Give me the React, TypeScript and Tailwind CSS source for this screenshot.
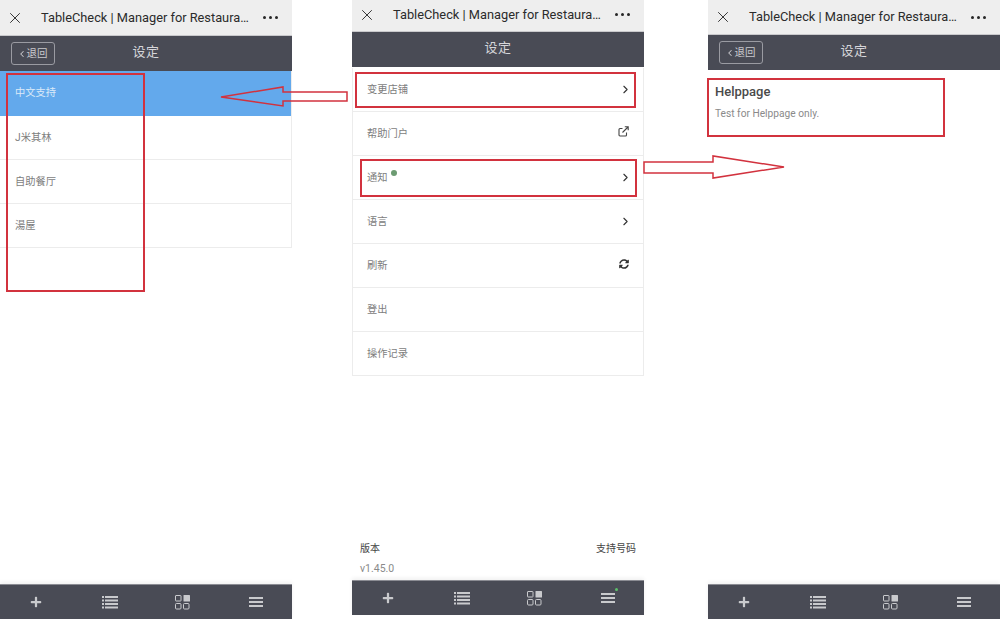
import React from "react";
import { ChevronRight, ChevronLeft, X } from "lucide-react";
import { FaPlus, FaSyncAlt } from "react-icons/fa";

const sans = "font-['Roboto','Noto_Sans_CJK_SC',sans-serif]";

const TopBar = ({ h }: { h: string }) => (
  <div className={`${h} shrink-0 flex items-center bg-[#eeeeee] text-[#2b2b2b] border-b border-[#c9c9cc]`}>
    <X className="w-[18px] h-[18px] ml-[6px] shrink-0" strokeWidth={1.25} />
    <div className="ml-[17px] w-[210px] whitespace-nowrap text-[12.8px] leading-5">
      TableCheck | Manager for Restaura…
    </div>
    <div className="ml-[12px] flex gap-[3px]">
      <span className="w-[3px] h-[3px] rounded-full bg-[#262626]" />
      <span className="w-[3px] h-[3px] rounded-full bg-[#262626]" />
      <span className="w-[3px] h-[3px] rounded-full bg-[#262626]" />
    </div>
  </div>
);

const NavBar = ({ back }: { back?: boolean }) => (
  <div className="relative h-[35px] shrink-0 flex items-center justify-center bg-[#494b55] text-[#d6d6da]">
    {back && (
      <div className="absolute left-[11px] top-[6px] h-[23px] w-[44px] flex items-center justify-center rounded-[3px] border border-[#9a9ba2] text-[10.5px] text-[#c8c8cc]">
        <ChevronLeft className="w-[10px] h-[10px] -ml-[2px]" strokeWidth={2.5} />
        退回
      </div>
    )}
    <span className="-mt-[4px] text-[13px] leading-5 tracking-[0.5px]">设定</span>
  </div>
);

const ListIcon = () => (
  <svg width="16" height="14" viewBox="0 0 16 14" fill="#c9cacd">
    <rect x="0" y="1" width="2" height="2" />
    <rect x="3" y="1" width="13" height="2" />
    <rect x="0" y="4.5" width="2" height="2" />
    <rect x="3" y="4.5" width="13" height="2" />
    <rect x="0" y="8" width="2" height="2" />
    <rect x="3" y="8" width="13" height="2" />
    <rect x="0" y="11.5" width="2" height="2" />
    <rect x="3" y="11.5" width="13" height="2" />
  </svg>
);

const GridIcon = () => (
  <svg width="15" height="15" viewBox="0 0 15 15" fill="none" stroke="#c9cacd" strokeWidth="1">
    <rect x="0.5" y="0.5" width="5.5" height="5.5" rx="0.5" />
    <rect x="8.5" y="0" width="6.5" height="6.5" rx="0.5" fill="#c9cacd" stroke="none" />
    <rect x="0.5" y="8.5" width="5.5" height="5.5" rx="1" />
    <rect x="8.5" y="8.5" width="5.5" height="5.5" rx="1" />
  </svg>
);

const MenuIcon = () => (
  <svg width="14" height="12" viewBox="0 0 14 12" fill="#c9cacd">
    <rect x="0" y="1" width="14" height="2" />
    <rect x="0" y="5" width="14" height="2" />
    <rect x="0" y="9" width="14" height="2" />
  </svg>
);

const Footer = ({ dot }: { dot?: boolean }) => (
  <div className="h-[35px] shrink-0 grid grid-cols-4 items-center justify-items-center bg-[#494b55] border-t border-[#8b8c93] shadow-[0_-2px_4px_rgba(0,0,0,0.06)]">
    <FaPlus className="w-[12px] h-[12px] -ml-[1px] text-[#c9cacd]" />
    <ListIcon />
    <GridIcon />
    <div className="relative flex">
      <MenuIcon />
      {dot && <span className="absolute -top-[4px] -right-[3px] w-[3px] h-[3px] rounded-full bg-[#5cc069]" />}
    </div>
  </div>
);

const Row = ({
  label,
  right,
  active,
  dot,
  inset,
}: {
  label: string;
  right?: React.ReactNode;
  active?: boolean;
  dot?: boolean;
  inset?: boolean;
}) => (
  <div
    className={`flex items-center justify-between text-[10.25px] border-b pr-[14px] ${inset ? "pl-[14px]" : "pl-[15px]"} ${
      active ? "h-[45px] bg-[#63a9ec] text-[#dbe9f8] border-[#63a9ec]" : "h-[44px] text-[#7d7d7d] border-[#ececec]"
    }`}
  >
    <span className="relative">
      {label}
      {dot && <span className="absolute -top-[0px] -right-[9px] w-[6px] h-[6px] rounded-full bg-[#6c9b72]" />}
    </span>
    {right}
  </div>
);

const chevron = <ChevronRight className="w-[13px] h-[13px] -mr-[3px] text-[#333333]" strokeWidth={2} />;

const ShareIcon = () => (
  <svg width="11" height="11" viewBox="0 0 11 11" fill="none" stroke="#444444" strokeWidth="1.1" className="-mt-[5px]">
    <path d="M8.5 6.5v2.5a1 1 0 0 1-1 1H2a1 1 0 0 1-1-1V3.5a1 1 0 0 1 1-1h2.5" />
    <path d="M4.5 6.5 10 1M6.8 0.8H10.2V4.2" />
  </svg>
);

const Frame = ({ className }: { className: string }) => (
  <div className={`absolute border-2 border-[#d2323e] pointer-events-none ${className}`} />
);

export default function App() {
  return (
    <div className={`relative w-[1000px] h-[620px] flex items-start bg-white overflow-hidden ${sans}`}>
      <div className="w-[292px] h-[619px] flex flex-col">
        <TopBar h="h-[36px]" />
        <NavBar back />
        <div className="flex-1">
          <div className="border-r border-[#ececec]">
            <Row label="中文支持" active />
            <Row label="J米其林" />
            <Row label="自助餐厅" />
            <Row label="湯屋" />
          </div>
        </div>
        <Footer />
      </div>

      <div className="ml-[60px] w-[292px] h-[615px] flex flex-col">
        <TopBar h="h-[32px] pb-[2px]" />
        <NavBar />
        <div className="flex-1 flex flex-col">
          <div className="border-x border-[#ececec] mt-[1px]">
            <Row inset label="变更店铺" right={chevron} />
            <Row inset label="帮助门户" right={<ShareIcon />} />
            <Row inset label="通知" right={chevron} dot />
            <Row inset label="语言" right={chevron} />
            <Row inset label="刷新" right={<FaSyncAlt className="w-[10px] h-[10px] -mt-[4px] text-[#333333]" />} />
            <Row inset label="登出" />
            <Row inset label="操作记录" />
          </div>
          <div className="mt-auto px-[8px] pb-[3px]">
            <div className="flex justify-between text-[10px] leading-4 text-[#444444]">
              <span>版本</span>
              <span>支持号码</span>
            </div>
            <div className="mt-[4px] text-[10.5px] leading-4 text-[#8a8a8a]">v1.45.0</div>
          </div>
        </div>
        <Footer dot />
      </div>

      <div className="ml-[64px] w-[292px] h-[619px] flex flex-col">
        <TopBar h="h-[35px]" />
        <NavBar back />
        <div className="flex-1 pl-[7px] pt-[13px]">
          <div className="text-[13px] leading-[18px] font-medium text-[#4a4a4a]">Helppage</div>
          <div className="mt-[5px] text-[10.2px] leading-4 text-[#8a8a8a]">Test for Helppage only.</div>
        </div>
        <Footer />
      </div>

      {/* red annotations */}
      <Frame className="left-[6px] top-[73px] w-[139px] h-[219px]" />
      <Frame className="left-[355px] top-[72px] w-[281px] h-[36px]" />
      <Frame className="left-[360px] top-[159px] w-[277px] h-[38px]" />
      <Frame className="left-[707px] top-[78px] w-[238px] h-[59px]" />
      <svg className="absolute left-[215px] top-[82px]" width="136" height="30" viewBox="215 82 136 30" fill="none" stroke="#d2323e" strokeWidth="1.5">
        <path d="M221 97 283 87V92H347V101H283V106Z" />
      </svg>
      <svg className="absolute left-[640px] top-[150px]" width="150" height="35" viewBox="640 150 150 35" fill="none" stroke="#d2323e" strokeWidth="1.5">
        <path d="M644 162H713V156L784 167 713 178V173H644Z" />
      </svg>
    </div>
  );
}
